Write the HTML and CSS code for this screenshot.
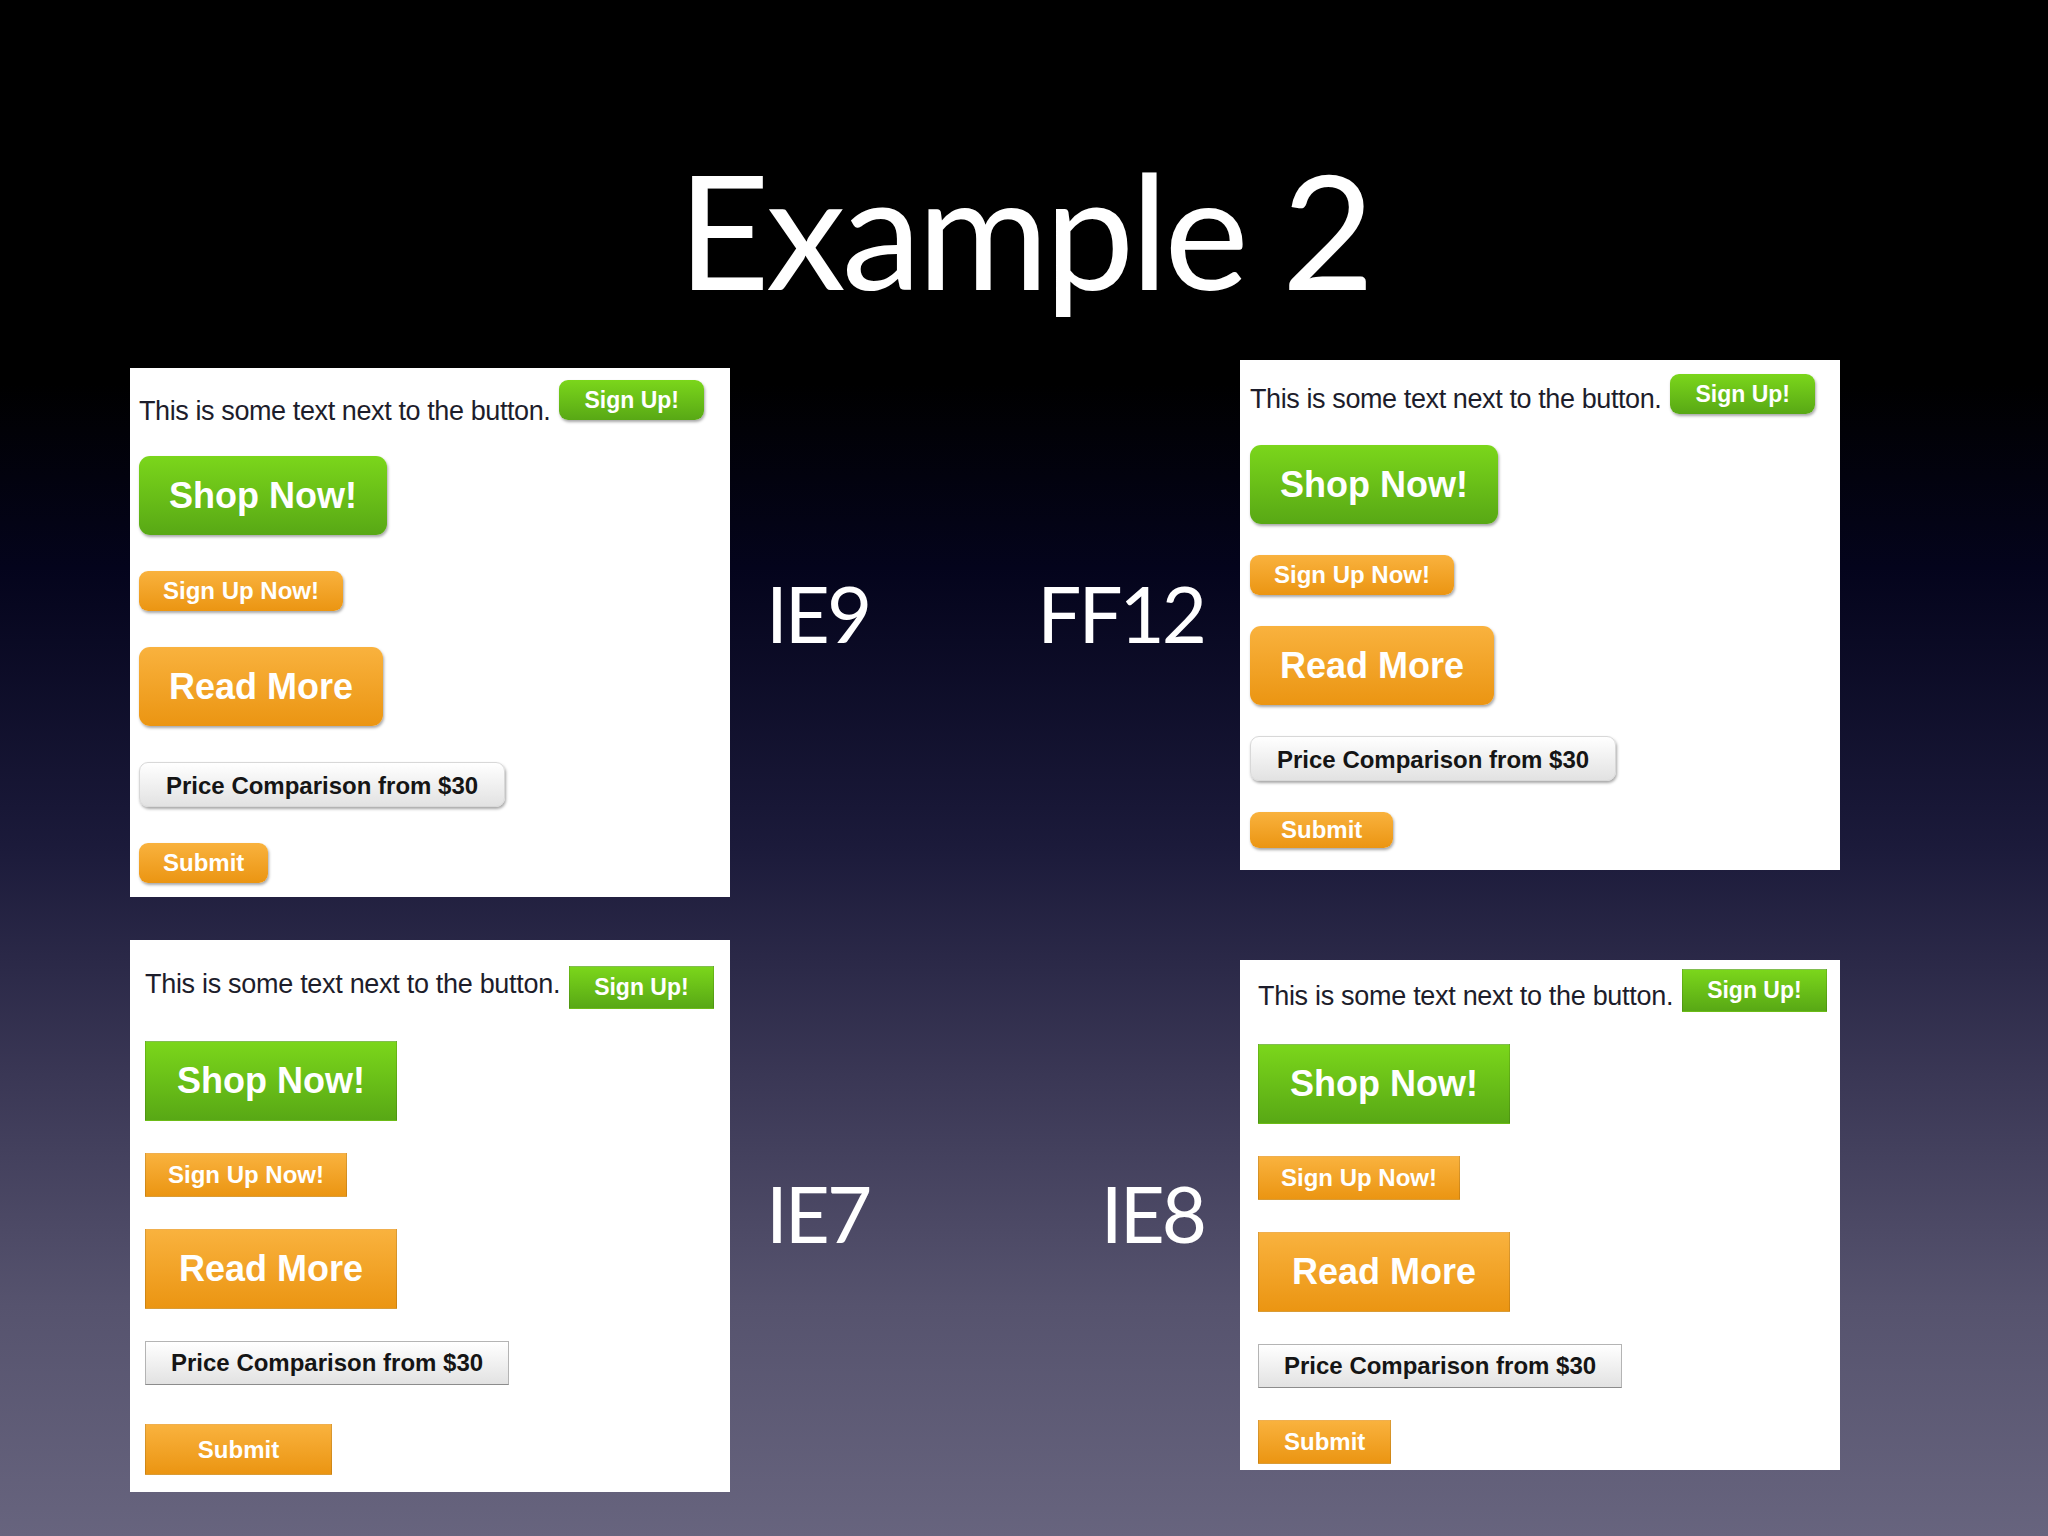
FILE: index.html
```html
<!DOCTYPE html>
<html>
<head>
    <title>Example 2</title>
    <link rel="stylesheet" href="styles.css">
</head>
<body>
    <div class="slide">
        <h1 class="title">Example 2</h1>

        <div class="row row-top">
            <div class="shot shot-ie9 rounded">
                <div class="line">
                    <span class="copy">This is some text next to the button.</span>
                    <span class="btn green">Sign Up!</span>
                </div>
                <span class="btn green lg">Shop Now!</span>
                <span class="btn orange sm">Sign Up Now!</span>
                <span class="btn orange lg">Read More</span>
                <span class="btn gray md">Price Comparison from $30</span>
                <span class="btn orange sm submit">Submit</span>
            </div>
            <div class="labels">
                <span class="label">IE9</span>
                <span class="label">FF12</span>
            </div>
            <div class="shot shot-ff12 rounded">
                <div class="line">
                    <span class="copy">This is some text next to the button.</span>
                    <span class="btn green">Sign Up!</span>
                </div>
                <span class="btn green lg">Shop Now!</span>
                <span class="btn orange sm">Sign Up Now!</span>
                <span class="btn orange lg">Read More</span>
                <span class="btn gray md">Price Comparison from $30</span>
                <span class="btn orange sm submit">Submit</span>
            </div>
        </div>

        <div class="row row-bottom">
            <div class="shot shot-ie7 flat">
                <div class="line">
                    <span class="copy">This is some text next to the button.</span>
                    <span class="btn green">Sign Up!</span>
                </div>
                <span class="btn green lg">Shop Now!</span>
                <span class="btn orange sm">Sign Up Now!</span>
                <span class="btn orange lg">Read More</span>
                <span class="btn gray md">Price Comparison from $30</span>
                <span class="btn orange sm submit">Submit</span>
            </div>
            <div class="labels">
                <span class="label">IE7</span>
                <span class="label">IE8</span>
            </div>
            <div class="shot shot-ie8 flat">
                <div class="line">
                    <span class="copy">This is some text next to the button.</span>
                    <span class="btn green">Sign Up!</span>
                </div>
                <span class="btn green lg">Shop Now!</span>
                <span class="btn orange sm">Sign Up Now!</span>
                <span class="btn orange lg">Read More</span>
                <span class="btn gray md">Price Comparison from $30</span>
                <span class="btn orange sm submit">Submit</span>
            </div>
        </div>
    </div>
</body>
</html>
```

FILE: styles.css
```css
* {
    box-sizing: border-box;
}
body {
    margin: 0;
    background: #000;
}
.slide {
    width: 2048px;
    height: 1536px;
    padding-top: 148px;
    background: linear-gradient(to bottom, #000 0%, #000 25%, #04041c 37%, #1b1a3a 55%, #3a3755 70%, #56536e 85%, #67647e 100%);
    font-family: Lato, "Open Sans", sans-serif;
    color: #fff;
}
.title {
    margin: 0;
    font-size: 160px;
    line-height: 160px;
    font-weight: normal;
    letter-spacing: -4px;
    text-align: center;
}

/* rows of screenshots */
.row {
    display: flex;
    align-items: flex-start;
    padding-left: 130px;
}
.row-top {
    margin-top: 52px;
}
.row-bottom {
    margin-top: 43px;
}
.labels {
    width: 510px;
    display: flex;
    justify-content: space-between;
    padding: 0 36px 0 36px;
    font-size: 78px;
    line-height: 78px;
    letter-spacing: -3px;
}
.row-top .labels {
    margin-top: 214px;
}
.row-bottom .labels {
    margin-top: 234px;
}

/* a browser screenshot */
.shot {
    width: 600px;
    background: #fff;
    display: flex;
    flex-direction: column;
    align-items: flex-start;
    font-family: "Liberation Sans", Arial, sans-serif;
}
.shot-ie9 {
    margin-top: 8px;
    padding: 12px 0 14px 9px;
    gap: 36px;
}
.shot-ff12 {
    padding: 14px 0 22px 10px;
    gap: 31px;
}
.shot-ie7 {
    padding: 26px 0 17px 15px;
    gap: 32px;
}
.shot-ie8 {
    margin-top: 20px;
    padding: 9px 0 6px 18px;
    gap: 32px;
}
.line {
    display: flex;
    align-items: flex-start;
    gap: 9px;
    height: 40px;
}
.flat .line {
    height: 43px;
    gap: 9px;
}
.copy {
    font-size: 27px;
    line-height: 27px;
    color: #1d1d2b;
    letter-spacing: -0.4px;
    white-space: nowrap;
}
.flat .copy {
    letter-spacing: -0.3px;
}
.shot-ie9 .copy { margin-top: 18px; }
.shot-ff12 .copy { margin-top: 12px; }
.shot-ie7 .copy { margin-top: 5px; }
.shot-ie8 .copy { margin-top: 14px; }

/* buttons */
.btn {
    display: block;
    color: #fff;
    font-weight: bold;
    text-align: center;
    white-space: nowrap;
    font-size: 23px;
    height: 40px;
    line-height: 40px;
    padding: 0 25px;
}
.sm {
    font-size: 24px;
    padding: 0 24px;
}
.lg {
    font-size: 36px;
    height: 79px;
    line-height: 79px;
    padding: 0 30px;
}
.md {
    font-size: 24px;
    height: 45px;
    line-height: 45px;
    padding: 0 26px;
    color: #151515;
}
.green {
    background: linear-gradient(to bottom, #7bd61b, #58a815);
}
.orange {
    background: linear-gradient(to bottom, #f9b23e, #eb9512);
}
.gray {
    background: linear-gradient(to bottom, #ffffff, #e2e2e2);
}

/* css3 browsers */
.rounded .btn {
    border-radius: 9px;
    box-shadow: 1px 2px 3px rgba(0, 0, 0, 0.35);
}
.rounded .lg {
    border-radius: 11px;
}
.rounded .gray {
    border: 1px solid #d8d8d8;
}
.shot-ff12 .submit {
    height: 36px;
    line-height: 36px;
    padding: 0 31px;
}

/* old ie: no corners, no shadows */
.flat .btn {
    border: 1px solid rgba(0, 0, 0, 0.12);
    border-top-color: rgba(255, 255, 255, 0.25);
}
.flat .line .btn {
    height: 43px;
    line-height: 41px;
    padding: 0 24px;
}
.flat .sm {
    height: 44px;
    line-height: 42px;
    padding: 0 22px;
}
.flat .lg {
    width: 252px;
    height: 80px;
    line-height: 78px;
    padding: 0;
}
.flat .md {
    height: 44px;
    line-height: 42px;
    padding: 0 25px;
    border: 1px solid #b4b4b4;
    border-bottom-color: #8c8c8c;
}
.shot-ie7 .submit {
    width: 187px;
    height: 51px;
    line-height: 49px;
    padding: 0;
    margin-top: 7px;
}
.shot-ie8 .submit {
    padding: 0 25px;
}
```
